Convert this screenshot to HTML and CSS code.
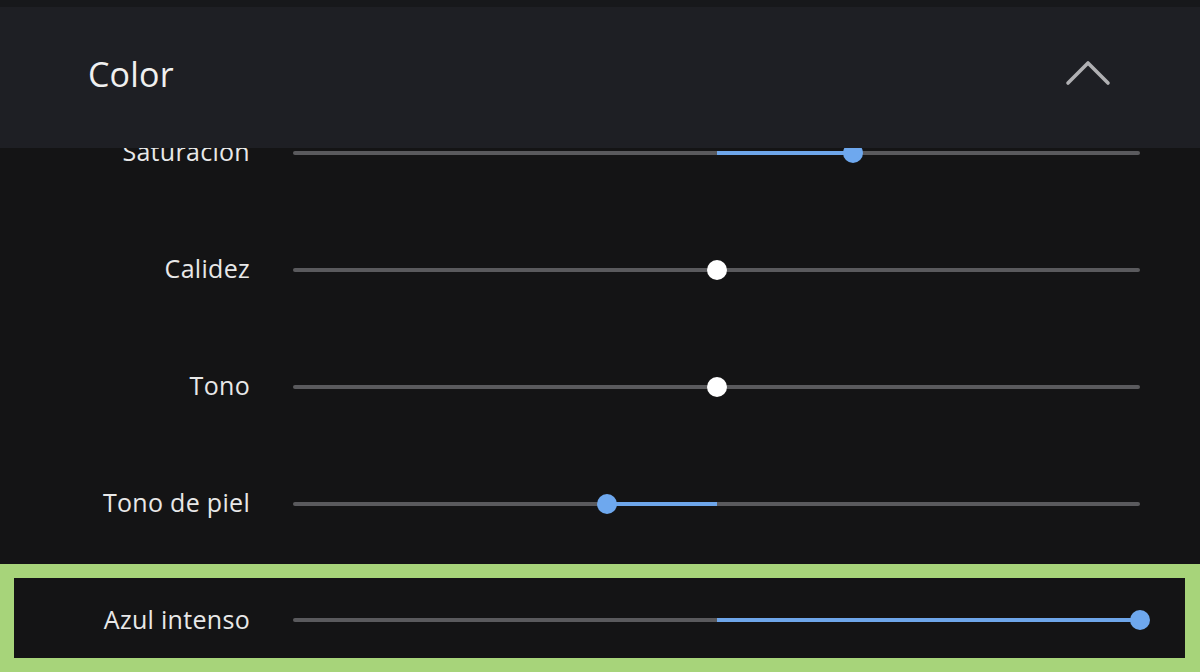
FILE: index.html
```html
<!DOCTYPE html>
<html lang="es">
<head>
<meta charset="utf-8">
<title>Color</title>
<link rel="stylesheet" href="styles.css">
</head>
<body>
<div class="screen">
  <header class="panel-header">
    <span class="panel-title">Color</span>
    <svg class="chevron" width="46" height="30" viewBox="0 0 46 30" aria-hidden="true">
      <polyline points="3,24 23,4 43,24" fill="none" stroke="#b0b0b3" stroke-width="3.6" stroke-linecap="round" stroke-linejoin="round"/>
    </svg>
  </header>
  <main class="panel-body">
    <div class="list">
      <div class="row">
        <span class="label">Saturación</span>
        <div class="track">
          <div class="fill" style="left:50.06%;width:16.06%"></div>
          <div class="thumb thumb--blue" style="left:66.12%"></div>
        </div>
      </div>
      <div class="row">
        <span class="label">Calidez</span>
        <div class="track">
          <div class="thumb thumb--white" style="left:50.06%"></div>
        </div>
      </div>
      <div class="row">
        <span class="label">Tono</span>
        <div class="track">
          <div class="thumb thumb--white" style="left:50.06%"></div>
        </div>
      </div>
      <div class="row">
        <span class="label">Tono de piel</span>
        <div class="track">
          <div class="fill" style="left:37.07%;width:12.99%"></div>
          <div class="thumb thumb--blue" style="left:37.07%"></div>
        </div>
      </div>
      <div class="highlight">
        <div class="row row--inner">
          <span class="label">Azul intenso</span>
          <div class="track">
            <div class="fill" style="left:50.06%;width:49.94%"></div>
            <div class="thumb thumb--blue" style="left:100%"></div>
          </div>
        </div>
      </div>
    </div>
  </main>
</div>
</body>
</html>
```

FILE: styles.css
```css
* { box-sizing: border-box; }

html, body {
  margin: 0;
  padding: 0;
  width: 1200px;
  height: 672px;
  overflow: hidden;
  background: #141415;
  font-family: "Open Sans", "Noto Sans", sans-serif;
}

.screen {
  width: 1200px;
  height: 672px;
  display: flex;
  flex-direction: column;
  overflow: hidden;
}

.panel-header {
  position: relative;
  z-index: 2;
  flex: 0 0 148px;
  height: 148px;
  background: #1e1f24;
  border-top: 7px solid #17181b;
  display: flex;
  align-items: center;
  justify-content: space-between;
  padding: 0 89px 2px 88px;
}

.panel-title {
  color: #f0f0f0;
  font-size: 34px;
  font-weight: 400;
  letter-spacing: 0.2px;
  margin-top: -6px;
}

.chevron {
  display: block;
  margin-top: -6px;
}

.panel-body {
  flex: 1 1 auto;
  overflow: hidden;
  background: #141415;
}

.list {
  margin-top: -54px;
  display: flex;
  flex-direction: column;
}

.row {
  height: 117px;
  display: grid;
  grid-template-columns: 250px 1fr;
  column-gap: 43px;
  align-items: center;
  padding-right: 60px;
}

.label {
  color: #e8e8e8;
  font-size: 25px;
  letter-spacing: 0.3px;
  text-align: right;
  white-space: nowrap;
  line-height: 1;
  margin-top: -2px;
}

.track {
  position: relative;
  height: 4px;
  border-radius: 2px;
  background: #5a5a5d;
}

.fill {
  position: absolute;
  top: 0;
  height: 4px;
  background: #6ea6ea;
}

.thumb {
  position: absolute;
  top: 50%;
  width: 20px;
  height: 20px;
  margin: -10px 0 0 -10px;
  border-radius: 50%;
}

.thumb--white { background: #ffffff; }
.thumb--blue { background: #6ea8ee; }

.highlight {
  margin-top: 2px;
  height: 108px;
  border: 14px solid #a7d47a;
  border-right-width: 15px;
  background: #141415;
}

.row--inner {
  height: 80px;
  grid-template-columns: 236px 1fr;
  padding-right: 45px;
  padding-top: 4px;
}
```
